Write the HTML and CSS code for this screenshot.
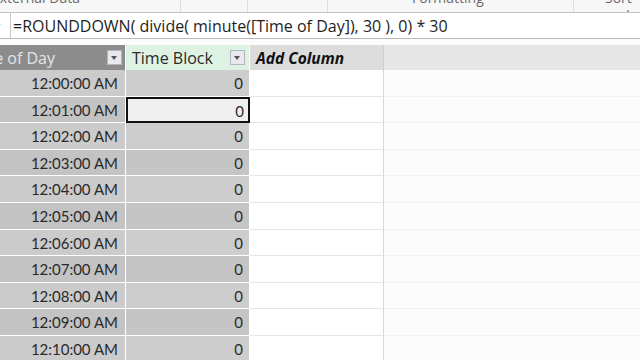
FILE: index.html
```html
<!DOCTYPE html>
<html lang="en">
<head>
    <meta charset="UTF-8">
    <title>Time Block</title>
    <link rel="stylesheet" href="styles.css">
</head>
<body>
    <div class="ribbon">
        <span class="group g-ext">External Data</span>
        <span class="sep s1"></span>
        <span class="sep s2"></span>
        <span class="sep s3"></span>
        <span class="group g-fmt">Formatting</span>
        <span class="sep s4"></span>
        <span class="group g-sort">Sort and Filter</span>
    </div>
    <div class="formula-bar">
        <div class="fx">fx</div>
        <div class="formula">=ROUNDDOWN( divide( minute([Time of Day]), 30 ), 0) * 30</div>
    </div>
    <div class="grid" id="grid">
        <div class="hd hd-time"><span class="hd-label">Time of Day</span><span class="drop"></span></div>
        <div class="hd hd-block"><span class="hd-label">Time Block</span><span class="drop"></span></div>
        <div class="hd hd-add">Add Column</div>
        <div class="hd hd-rest"></div>
    </div>

    <script>
        var grid = document.getElementById("grid");
        var html = "";
        for (var m = 0; m <= 10; m++) {
            var mm = m < 10 ? "0" + m : "" + m;
            var shade = m % 2 == 0 ? "even" : "odd";
            html += "<div class='c c-time " + shade + "'>12:" + mm + ":00 AM</div>";
            html += "<div class='c c-block " + shade + (m == 1 ? " selected" : "") + "'>0</div>";
            html += "<div class='c c-add'></div>";
            html += "<div class='c c-rest'></div>";
        }
        grid.insertAdjacentHTML("beforeend", html);
    </script>
</body>
</html>
```

FILE: styles.css
```css
* {
    box-sizing: border-box;
}
body {
    margin: 0;
    width: 640px;
    height: 360px;
    overflow: hidden;
    background: #fcfcfc;
    font-family: "Open Sans", sans-serif;
}
.ribbon {
    position: relative;
    height: 12px;
    background: #f7f7f7;
    overflow: hidden;
    color: #6a6a6a;
    font-size: 14px;
}
.group {
    position: absolute;
    top: -11px;
    line-height: 18px;
}
.g-ext { left: -8px; }
.g-fmt { left: 412px; }
.g-sort { left: 605px; }
.sep {
    position: absolute;
    top: 0;
    width: 1px;
    height: 12px;
    background: #dedede;
}
.s1 { left: 180px; }
.s2 { left: 247px; }
.s3 { left: 327px; }
.s4 { left: 573px; }

.formula-bar {
    display: flex;
    height: 27px;
    border-top: 1px solid #c6c6c6;
    border-bottom: 1px solid #b8b8b8;
    background: #fff;
}
.fx {
    width: 11px;
    border-right: 1px solid #c9c9c9;
    font-family: "Liberation Serif", serif;
    font-style: italic;
    font-size: 13px;
    line-height: 26px;
    color: #555;
    text-indent: -9px;
    overflow: hidden;
}
.formula {
    padding-left: 2px;
    font-size: 16px;
    line-height: 26px;
    color: #1e1e1e;
    white-space: nowrap;
}

.grid {
    display: grid;
    grid-template-columns: 126px 124px 134px 1fr;
    grid-template-rows: 25px;
    grid-auto-rows: 26.6px;
    margin-top: 6px;
}
.hd {
    display: flex;
    align-items: center;
    font-size: 16px;
    color: #2a2a2a;
    border-right: 1px solid #fff;
    white-space: nowrap;
    overflow: hidden;
}
.hd-time {
    background: #8c8c8c;
    color: #e4e4e4;
    justify-content: flex-end;
    padding-right: 3px;
}
.hd-time .hd-label {
    margin-right: 52px;
}
.hd-block {
    background: #def2e4;
    padding-left: 6px;
    padding-right: 4px;
    justify-content: space-between;
}
.hd-add {
    background: #dcdcdc;
    font-weight: bold;
    font-style: italic;
    font-size: 15.5px;
    padding-left: 6px;
    color: #111;
    border-right: 1px solid #d0d0d0;
}
.hd-rest {
    background: #e6e6e6;
    border-right: none;
}
.drop {
    position: relative;
    flex-shrink: 0;
    width: 15px;
    height: 15px;
    background: #e8e8ee;
    border: 1px solid #b4b4bc;
}
.drop::after {
    content: "";
    position: absolute;
    left: 3px;
    top: 5px;
    border-left: 3.5px solid transparent;
    border-right: 3.5px solid transparent;
    border-top: 4px solid #555;
}

.c {
    font-family: "Lato", sans-serif;
    font-size: 15px;
    color: #2a2a2a;
    text-align: right;
    line-height: 26px;
    padding-right: 7px;
    border-right: 1px solid #fff;
    border-bottom: 1px solid #fff;
}
.c-time.even { background: #cbcbcb; }
.c-time.odd { background: #c3c3c3; }
.c-block.even { background: #cdcdcd; }
.c-block.odd { background: #c5c5c5; }
.c-block {
    padding-right: 6px;
}
.selected {
    background: #f0f0f0 !important;
    border: 2px solid #111;
    line-height: 24px;
    padding-right: 4px;
}
.c-add {
    background: #fff;
    border-right: 1px solid #d8d8d8;
    border-bottom: 1px solid #e6e6e6;
}
.c-rest {
    background: #fcfcfc;
    border-right: none;
    border-bottom: 1px solid #f2f2f2;
}
```
